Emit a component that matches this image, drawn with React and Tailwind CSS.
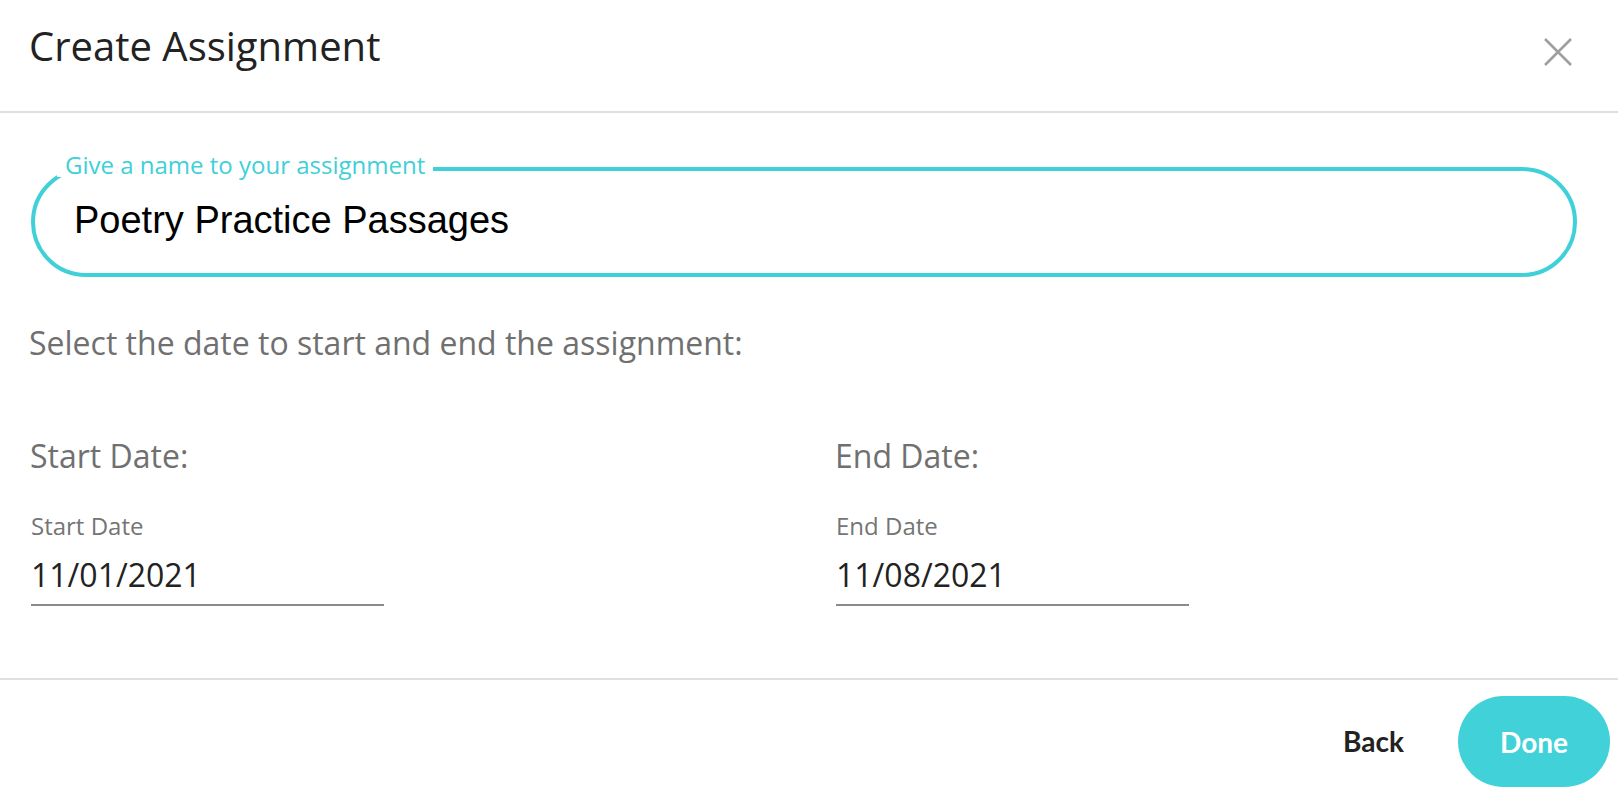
import { useState } from "react";

function DateField({ heading, label, value }) {
  return (
    <div className="flex flex-col">
      <div className="-ml-[1px] text-[32px] leading-[44px] text-[#707070]">{heading}</div>
      <div className="mt-[32px] text-[24px] leading-[32px] text-[#757575]">{label}</div>
      <div className="mt-[13px] w-[353px] border-b-2 border-[#8a8a8a] pb-[9px] text-[32px] leading-[40px] text-[#222]">
        {value}
      </div>
    </div>
  );
}

export default function App() {
  const [name, setName] = useState("Poetry Practice Passages");

  return (
    <div
      className="min-h-screen bg-white"
      style={{ fontFamily: '"Open Sans", sans-serif' }}
    >
      {/* Header */}
      <div className="flex h-[113px] items-start justify-between border-b-2 border-[#e0e0e0] pl-[29px] pr-[46px] pt-[18px]">
        <h1 className="text-[40px] leading-[56px] text-[#222]">Create Assignment</h1>
        <button className="mt-[20px] text-[#9e9e9e]" aria-label="Close">
          <svg width="28" height="28" viewBox="0 0 28 28">
            <path d="M1 1 L27 27 M27 1 L1 27" stroke="currentColor" strokeWidth="2.6" />
          </svg>
        </button>
      </div>

      {/* Body */}
      <div className="pl-[31px] pr-[41px] pt-[54px]">
        <div className="relative flex h-[110px] items-center rounded-full border-4 border-[#40d0d8] pb-[4px] pl-[39px] pr-[41px]">
          <label className="absolute -top-[18px] left-[22px] bg-white px-[8px] text-[24px] leading-[24px] text-[#40d0d8]">
            Give a name to your assignment
          </label>
          <input
            value={name}
            onChange={(e) => setName(e.target.value)}
            className="w-full bg-transparent text-[38px] text-black outline-none"
            style={{ fontFamily: '"Liberation Sans", Arial, sans-serif' }}
          />
        </div>

        <p className="-ml-[2px] mt-[44px] text-[32px] leading-[44px] text-[#707070]">
          Select the date to start and end the assignment:
        </p>

        <div className="mt-[69px] flex pb-[72px]">
          <div className="w-[805px]">
            <DateField heading="Start Date:" label="Start Date" value="11/01/2021" />
          </div>
          <DateField heading="End Date:" label="End Date" value="11/08/2021" />
        </div>
      </div>

      {/* Footer */}
      <div
        className="flex items-start justify-end gap-[54px] border-t-2 border-[#e0e0e0] pr-[8px] pt-[16px]"
        style={{ fontFamily: "Lato, sans-serif" }}
      >
        <button className="mt-[25px] text-[28px] font-bold leading-[40px] text-[#222]">Back</button>
        <button className="h-[91px] w-[152px] rounded-full bg-[#41d2d9] text-[28px] font-bold text-white">
          Done
        </button>
      </div>
    </div>
  );
}
